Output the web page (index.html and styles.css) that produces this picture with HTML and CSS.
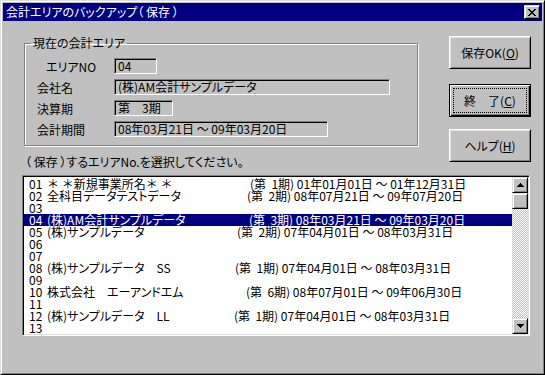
FILE: index.html
```html
<!DOCTYPE html>
<html lang="ja">
<head>
  <meta charset="UTF-8" />
  <title>会計エリアのバックアップ（保存）</title>
  <link rel="stylesheet" href="styles.css">
</head>
<body>

  <div class="window">
    <div class="titlebar">
      <span class="title">会計エリアのバックアップ（ 保存 ）</span>
      <span class="close-btn">
        <svg width="8" height="7" viewBox="0 0 8 7" shape-rendering="crispEdges">
          <path d="M0 0h2v1H0zM6 0h2v1H6zM1 1h2v1H1zM5 1h2v1H5zM2 2h4v1H2zM3 3h2v1H3zM2 4h4v1H2zM1 5h2v1H1zM5 5h2v1H5zM0 6h2v1H0zM6 6h2v1H6z" fill="#000"/>
        </svg>
      </span>
    </div>

    <div class="dialog-body">
      <div class="top">
        <div class="left">
          <fieldset class="group">
            <legend>現在の会計エリア</legend>
            <div class="row indent"><label>エリアNO</label><span class="field w-no">04</span></div>
            <div class="row"><label>会社名</label><span class="field w-name">(株)AM会計サンプルデータ</span></div>
            <div class="row"><label>決算期</label><span class="field w-term">第　3期</span></div>
            <div class="row"><label>会計期間</label><span class="field w-period">08年03月21日 ～ 09年03月20日</span></div>
          </fieldset>
          <p class="hint">（ 保存 ）するエリアNo.を選択してください。</p>
        </div>

        <div class="buttons">
          <button class="btn"><span class="face">保存OK(<u>O</u>)</span></button>
          <button class="btn default"><span class="face">終　了(<u>C</u>)</span></button>
          <button class="btn"><span class="face">ヘルプ(<u>H</u>)</span></button>
        </div>
      </div>

      <div class="listbox">
        <ul class="list">
          <li><span class="num">01</span><span class="name w203"><span class="full">＊ ＊</span>新規事業所名<span class="full">＊ ＊</span></span><span>(第  1期) 01年01月01日 ～ 01年12月31日</span></li>
          <li><span class="num">02</span><span class="name w200">全科目データテストデータ</span><span>(第  2期) 08年07月21日 ～ 09年07月20日</span></li>
          <li><span class="num">03</span></li>
          <li class="sel"><span class="num">04</span><span class="name w202">(株)AM会計サンプルデータ</span><span>(第  3期) 08年03月21日 ～ 09年03月20日</span></li>
          <li><span class="num">05</span><span class="name w190">(株)サンプルデータ</span><span>(第  2期) 07年04月01日 ～ 08年03月31日</span></li>
          <li><span class="num">06</span></li>
          <li><span class="num">07</span></li>
          <li><span class="num">08</span><span class="name w188">(株)サンプルデータ　SS</span><span>(第  1期) 07年04月01日 ～ 08年03月31日</span></li>
          <li><span class="num">09</span></li>
          <li><span class="num">10</span><span class="name w199">株式会社　エーアンドエム</span><span>(第  6期) 08年07月01日 ～ 09年06月30日</span></li>
          <li><span class="num">11</span></li>
          <li><span class="num">12</span><span class="name w187">(株)サンプルデータ　LL</span><span>(第  1期) 07年04月01日 ～ 08年03月31日</span></li>
          <li><span class="num">13</span></li>
        </ul>
        <div class="scrollbar">
          <span class="sb-btn">
            <svg width="7" height="4" viewBox="0 0 7 4" shape-rendering="crispEdges"><path d="M3 0h1v1H3zM2 1h3v1H2zM1 2h5v1H1zM0 3h7v1H0z" fill="#000"/></svg>
          </span>
          <span class="sb-btn"></span>
          <span class="sb-track"></span>
          <span class="sb-btn">
            <svg width="7" height="4" viewBox="0 0 7 4" shape-rendering="crispEdges"><path d="M0 0h7v1H0zM1 1h5v1H1zM2 2h3v1H2zM3 3h1v1H3z" fill="#000"/></svg>
          </span>
        </div>
      </div>
    </div>
  </div>

</body>
</html>
```

FILE: styles.css
```css
/* Win95 style dialog */
* {
  box-sizing: border-box;
}

body {
  margin: 0;
  font-family: "Noto Sans CJK JP", sans-serif;
  font-size: 12px;
  font-feature-settings: "palt";
  color: #000;
}

.window {
  width: 545px;
  height: 375px;
  background: #c0c0c0;
  border: 1px solid;
  border-color: #dfdfdf #000 #000 #dfdfdf;
  box-shadow: inset 1px 1px #fff, inset -1px -1px #808080;
  padding: 2px;
}

.titlebar {
  height: 18px;
  background: #000080;
  color: #fff;
  display: flex;
  align-items: center;
  justify-content: space-between;
  padding: 0 2px 0 3px;
}

.title {
  line-height: 18px;
  white-space: pre;
}

.close-btn,
.sb-btn {
  background: #c0c0c0;
  border: 1px solid;
  border-color: #dfdfdf #000 #000 #dfdfdf;
  box-shadow: inset 1px 1px #fff, inset -1px -1px #808080;
  display: flex;
  align-items: center;
  justify-content: center;
}

.close-btn {
  width: 16px;
  height: 14px;
}

.dialog-body {
  padding: 15px 12px 0 19px;
}

.top {
  display: flex;
  justify-content: space-between;
}

.left {
  width: 396px;
}

/* group box */
.group {
  margin: 0 0 0 2px;
  width: 394px;
  border: 1px solid #808080;
  box-shadow: inset 1px 1px #fff, 1px 1px #fff;
  padding: 8px 0 8px 12px;
  display: flex;
  flex-direction: column;
  gap: 5px;
}

.group legend {
  padding: 0 2px;
  margin-left: -6px;
  line-height: 14px;
}

.row {
  display: flex;
  align-items: center;
  height: 16px;
}

.row label {
  width: 77px;
}

.row.indent label {
  padding-left: 9px;
}

.field {
  height: 16px;
  border: 1px solid;
  border-color: #808080 #fff #fff #808080;
  box-shadow: inset 1px 1px #000;
  padding: 0 3px;
  line-height: 14px;
  white-space: nowrap;
}

.w-no { width: 43px; }
.w-name { width: 276px; }
.w-term { width: 59px; }
.w-period { width: 214px; }

.hint {
  margin: 9px 0 0 3px;
  line-height: 14px;
  white-space: pre;
}

/* buttons */
.buttons {
  display: flex;
  flex-direction: column;
  margin-right: -1px;
}

.btn {
  width: 82px;
  height: 33px;
  font: inherit;
  color: #000;
  background: #c0c0c0;
  border: 1px solid;
  border-color: #fff #000 #000 #fff;
  box-shadow: inset 1px 1px #dfdfdf, inset -1px -1px #808080;
  padding: 3px;
  margin: 0;
}

.btn + .btn {
  margin-top: 15px;
}

.btn + .btn + .btn {
  margin-top: 12px;
}

.btn.default {
  border-color: #000;
  box-shadow: inset 1px 1px #fff, inset -1px -1px #000, inset -2px -2px #808080;
}

.face {
  display: flex;
  align-items: center;
  justify-content: center;
  height: 100%;
  border: 1px dotted transparent;
}

.default .face {
  border-color: #000;
}

/* list box */
.listbox {
  margin-top: 6px;
  height: 161px;
  display: flex;
  background: #fff;
  border: 1px solid;
  border-color: #808080 #fff #fff #808080;
  box-shadow: inset 1px 1px #000, inset -1px -1px #dfdfdf;
  padding: 1px;
}

.list {
  flex: 1;
  list-style: none;
  margin: 0;
  padding: 1px 0 0;
}

.list li {
  display: flex;
  height: 12px;
  line-height: 12px;
  padding-left: 5px;
  white-space: pre;
}

.list li.sel {
  background: #000080;
  color: #fff;
}

.num { width: 18px; }

.full {
  font-feature-settings: normal;
}

.w187 { width: 187px; }
.w188 { width: 188px; }
.w190 { width: 190px; }
.w199 { width: 199px; }
.w200 { width: 200px; }
.w202 { width: 202px; }
.w203 { width: 203px; }

.scrollbar {
  width: 16px;
  display: flex;
  flex-direction: column;
}

.sb-btn {
  height: 16px;
}

.sb-track {
  flex: 1;
  background: repeating-conic-gradient(#fff 0 25%, #c0c0c0 0 50%) 0 0 / 2px 2px;
}
```
